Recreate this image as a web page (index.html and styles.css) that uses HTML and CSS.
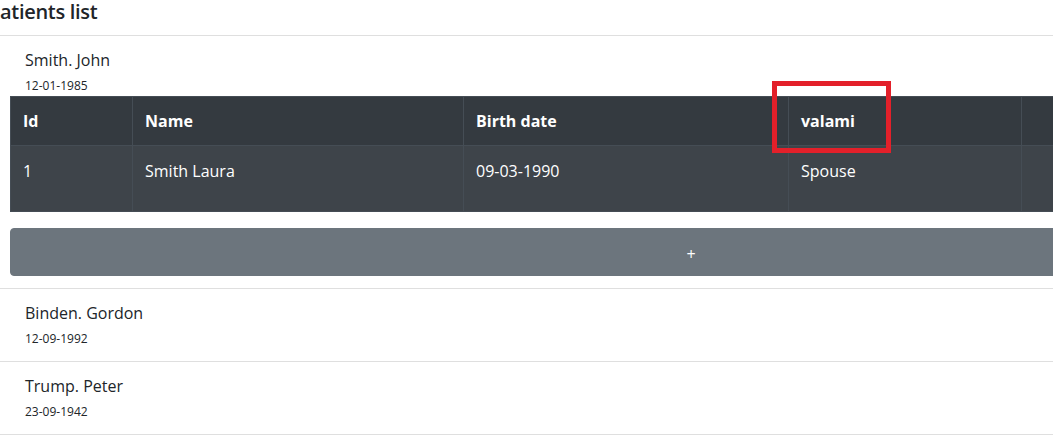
FILE: index.html
```html
<!DOCTYPE html>
<html lang="en">
<head>
<meta charset="utf-8">
<title>Patients list</title>
<link rel="stylesheet" href="styles.css">
</head>
<body>
<div class="page">
  <h1 class="title">Patients list</h1>
  <ul class="patients">
    <li class="patient">
      <div class="info">
        <div class="name">Smith. John</div>
        <div class="dob">12-01-1985</div>
      </div>
      <div class="details">
        <table class="relatives">
          <colgroup>
            <col class="c-id"><col class="c-name"><col class="c-birth"><col class="c-rel"><col class="c-actions">
          </colgroup>
          <thead>
            <tr>
              <th>Id</th>
              <th>Name</th>
              <th>Birth date</th>
              <th class="marked">valami<span class="annotation"></span></th>
              <th></th>
            </tr>
          </thead>
          <tbody>
            <tr>
              <td>1</td>
              <td>Smith Laura</td>
              <td>09-03-1990</td>
              <td>Spouse</td>
              <td></td>
            </tr>
          </tbody>
        </table>
        <button class="add-btn" type="button">+</button>
      </div>
    </li>
    <li class="patient">
      <div class="info">
        <div class="name">Binden. Gordon</div>
        <div class="dob">12-09-1992</div>
      </div>
    </li>
    <li class="patient">
      <div class="info">
        <div class="name">Trump. Peter</div>
        <div class="dob">23-09-1942</div>
      </div>
    </li>
  </ul>
</div>
</body>
</html>
```

FILE: styles.css
```css
* {
  box-sizing: border-box;
}

html, body {
  margin: 0;
  padding: 0;
  overflow: hidden;
  background: #fff;
}

body {
  font-family: "Segoe UI", "Open Sans", "Liberation Sans", sans-serif;
  font-size: 16px;
  line-height: 24px;
  color: #212529;
}

.page {
  width: 1382px;
}

.title {
  margin: 0 0 11px -12px;
  font-size: 20px;
  line-height: 24px;
  font-weight: 600;
  letter-spacing: -0.3px;
  color: #212529;
}

.patients {
  list-style: none;
  margin: 0;
  padding: 0;
}

.patient {
  border-top: 1px solid rgba(0, 0, 0, 0.125);
  padding: 12px 0;
}

.patient:last-child {
  border-bottom: 1px solid rgba(0, 0, 0, 0.125);
}

.info {
  padding-left: 25px;
}

.name {
  font-size: 16px;
  line-height: 24px;
}

.dob {
  margin-top: 3px;
  font-size: 12px;
  line-height: 21px;
}

.details {
  padding: 0 10px;
}

.relatives {
  width: 100%;
  table-layout: fixed;
  border-collapse: collapse;
  background: #343a40;
  color: #fff;
}

.c-id { width: 122px; }
.c-name { width: 331px; }
.c-birth { width: 325px; }
.c-rel { width: 233px; }
.c-actions { width: 351px; }

.relatives th,
.relatives td {
  border: 1px solid #454d55;
  padding: 12px;
  text-align: left;
  vertical-align: top;
  font-size: 16px;
  line-height: 24px;
}

.relatives th {
  font-weight: 700;
}

.relatives tbody tr {
  background: #3e444a;
}

.relatives tbody td {
  height: 66px;
  padding-top: 13px;
}

.marked {
  position: relative;
}

.annotation {
  position: absolute;
  left: -17px;
  top: -16px;
  width: 119px;
  height: 72px;
  border: 5px solid #e3202a;
  pointer-events: none;
}

.add-btn {
  display: block;
  width: 100%;
  margin-top: 16px;
  padding: 13px 12px 9px;
  border: 1px solid #6c757d;
  border-radius: 4px;
  background: #6c757d;
  color: #fff;
  font-family: inherit;
  font-size: 16px;
  line-height: 24px;
  text-align: center;
}
```
